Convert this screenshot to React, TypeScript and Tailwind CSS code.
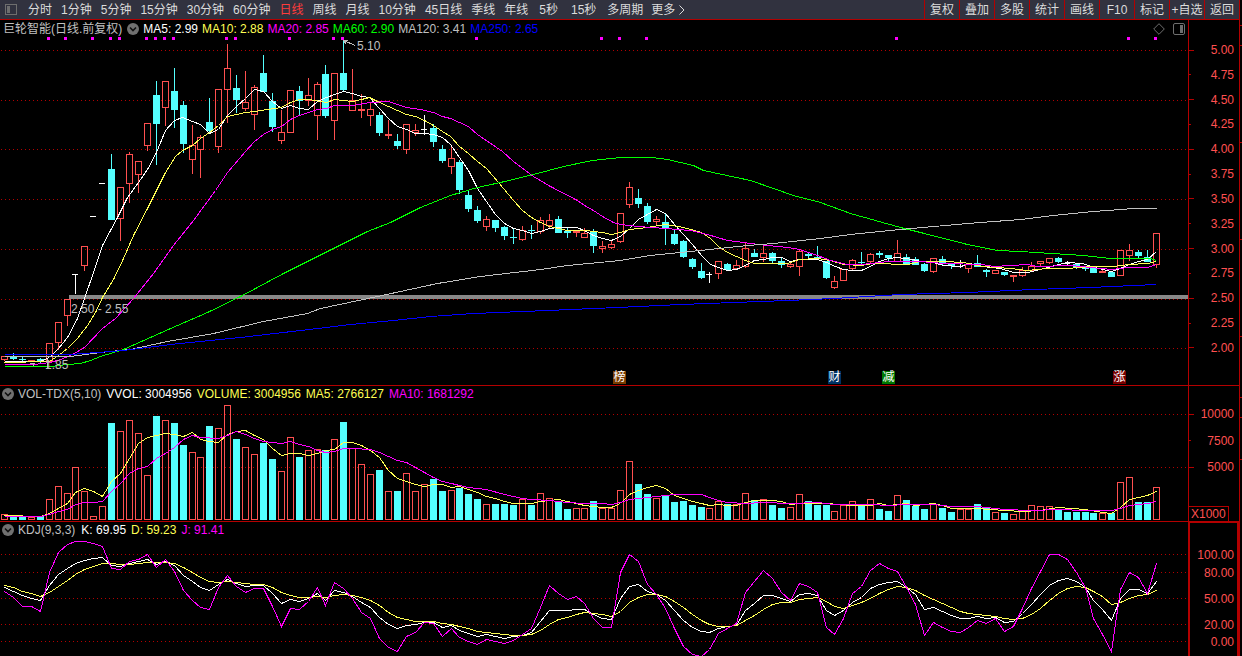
import React from "react";

type Kind = "r" | "c" | "w";
type Candle = [Kind, number, number, number, number];
type Point = [number, number];

const PLOT_WIDTH = 1188;

const barX = (i: number) => Math.round(4 + i * 8.93);

// kind, high, body top, body bottom, low
const candles: Candle[] = [
  ["r", 356, 356, 360, 361], ["c", 353, 357, 359, 360], ["c", 357, 359, 360, 361], ["r", 360, 360, 362, 362], ["c", 358, 359, 362, 364],
  ["r", 343, 343, 362, 362], ["r", 322, 322, 343, 350], ["r", 299, 299, 316, 326], ["w", 274, 274, 274, 294], ["r", 246, 246, 266, 271],
  ["w", 216, 216, 216, 216], ["w", 183, 183, 183, 183], ["c", 154, 169, 220, 220], ["r", 187, 187, 219, 241], ["r", 152, 154, 184, 203],
  ["r", 161, 161, 175, 193], ["r", 123, 123, 146, 151], ["c", 81, 95, 124, 165], ["r", 81, 81, 108, 126], ["c", 68, 91, 110, 128],
  ["c", 101, 105, 144, 153], ["r", 125, 145, 160, 174], ["r", 135, 137, 150, 178], ["c", 98, 122, 131, 132], ["r", 89, 89, 147, 153],
  ["r", 44, 68, 90, 123], ["c", 75, 88, 100, 113], ["r", 71, 102, 109, 111], ["r", 85, 87, 115, 130], ["c", 55, 73, 92, 92],
  ["c", 93, 101, 127, 132], ["r", 110, 132, 141, 144], ["r", 90, 90, 133, 133], ["c", 86, 91, 101, 115], ["r", 78, 95, 101, 106],
  ["r", 82, 84, 116, 140], ["c", 65, 74, 116, 118], ["r", 73, 73, 121, 140], ["c", 40, 73, 90, 91], ["r", 69, 100, 111, 111],
  ["r", 94, 109, 111, 118], ["r", 102, 109, 116, 126], ["c", 112, 115, 133, 136], ["r", 120, 134, 136, 139], ["c", 134, 141, 146, 149],
  ["r", 124, 124, 150, 154], ["r", 124, 130, 133, 136], ["w", 115, 129, 129, 135], ["c", 124, 128, 142, 147], ["c", 145, 149, 161, 163],
  ["r", 147, 158, 167, 174], ["c", 160, 162, 190, 194], ["c", 191, 195, 209, 212], ["c", 206, 210, 221, 223], ["r", 216, 219, 227, 231],
  ["c", 220, 220, 228, 232], ["c", 226, 227, 236, 240], ["c", 228, 237, 238, 244], ["r", 226, 230, 240, 241], ["c", 225, 230, 231, 239],
  ["r", 217, 220, 232, 234], ["r", 214, 220, 226, 228], ["c", 216, 219, 233, 233], ["c", 228, 231, 233, 238], ["r", 231, 231, 233, 237],
  ["r", 228, 233, 238, 238], ["c", 229, 231, 246, 253], ["r", 241, 246, 249, 253], ["r", 241, 244, 248, 249], ["r", 213, 213, 242, 243],
  ["r", 182, 187, 205, 208], ["c", 189, 198, 204, 208], ["c", 203, 206, 222, 224], ["r", 216, 219, 222, 225], ["c", 214, 222, 229, 245],
  ["c", 230, 234, 244, 245], ["c", 240, 241, 257, 258], ["c", 258, 259, 267, 269], ["c", 263, 271, 278, 279], ["w", 272, 274, 274, 283],
  ["r", 261, 261, 274, 279], ["c", 263, 264, 270, 270], ["r", 260, 265, 269, 269], ["r", 242, 248, 267, 268], ["c", 249, 253, 257, 257],
  ["r", 246, 253, 258, 262], ["c", 252, 253, 261, 263], ["c", 257, 261, 265, 268], ["r", 261, 264, 267, 268], ["r", 249, 251, 267, 276],
  ["c", 253, 254, 256, 259], ["c", 246, 257, 258, 259], ["c", 261, 261, 278, 279], ["r", 276, 281, 288, 289], ["r", 269, 269, 281, 281],
  ["r", 259, 260, 269, 271], ["c", 252, 262, 263, 264], ["r", 253, 254, 262, 264], ["c", 251, 253, 255, 258], ["c", 255, 255, 258, 261],
  ["r", 240, 253, 262, 262], ["c", 254, 257, 264, 264], ["c", 257, 259, 265, 265], ["c", 263, 264, 271, 272], ["r", 258, 258, 272, 273],
  ["c", 256, 259, 264, 266], ["c", 263, 264, 266, 269], ["w", 260, 266, 266, 268], ["r", 264, 264, 269, 273], ["c", 255, 263, 267, 267],
  ["c", 269, 270, 272, 277], ["r", 270, 270, 274, 274], ["c", 272, 272, 275, 276], ["r", 275, 275, 277, 282], ["r", 267, 270, 276, 277],
  ["r", 262, 266, 271, 271], ["r", 261, 261, 264, 267], ["r", 258, 258, 263, 264], ["c", 257, 258, 262, 263], ["w", 261, 263, 263, 265],
  ["c", 264, 264, 267, 269], ["c", 266, 267, 269, 271], ["c", 268, 268, 273, 273], ["r", 269, 271, 273, 273], ["c", 271, 272, 277, 277],
  ["r", 250, 250, 276, 276], ["r", 244, 250, 256, 261], ["c", 250, 252, 256, 258], ["c", 250, 257, 262, 262], ["r", 233, 233, 265, 268],
];

const volumeTops: number[] = [
  514, 517, 516, 517, 516, 499, 486, 493, 467, 491, 516, 506, 423, 431, 420, 433, 475, 416, 420, 423,
  445, 452, 457, 426, 428, 405, 439, 447, 454, 443, 459, 471, 437, 457, 450, 449, 450, 439, 422, 448,
  464, 474, 470, 491, 491, 473, 491, 484, 479, 491, 490, 488, 494, 499, 504, 504, 504, 505, 499, 505,
  493, 498, 501, 509, 508, 508, 501, 508, 508, 490, 461, 484, 494, 498, 495, 502, 501, 505, 507, 508,
  501, 504, 504, 493, 500, 499, 505, 508, 507, 494, 501, 505, 505, 511, 505, 501, 505, 499, 509, 511,
  495, 500, 506, 509, 504, 508, 512, 509, 509, 504, 508, 512, 513, 514, 511, 505, 506, 506, 509, 512,
  512, 512, 513, 513, 513, 482, 477, 502, 502, 487,
];

const ma5 =
  "4,361 40,361 49,357 58,348 67,337 77,318 84,298 93,272 102,245 117,217 127,197 138,182 147,169 156,152 165,130 174,120 182,117 192,121 200,124 209,133 218,129 227,115 236,106 245,98 254,89 263,91 272,101 281,108 290,105 299,108 308,109 317,101 326,97 334,94 343,91 352,93 361,96 369,97 379,108 388,118 397,126 406,129 415,133 424,133 433,134 442,137 450,144 459,157 468,170 477,188 486,201 495,214 504,223 513,228 522,230 531,233 540,231 549,228 558,227 576,227 584,230 593,235 602,238 611,240 620,236 629,228 638,219 647,214 656,209 665,213 674,224 683,234 692,244 701,255 710,264 718,267 727,270 736,269 745,265 754,260 763,259 772,257 781,257 790,261 799,259 817,259 826,262 835,266 843,269 852,270 861,270 870,266 879,261 888,258 897,257 912,259 920,261 933,262 943,265 960,266 969,263 982,266 1000,268 1013,272 1027,272 1040,269 1058,264 1067,262 1082,263 1094,267 1111,271 1120,268 1129,264 1138,261 1147,259 1156,251";
const ma10 =
  "4,362 49,361 58,355 67,348 77,338 87,325 95,312 102,297 113,279 123,258 133,235 147,208 156,190 165,172 175,156 182,150 192,145 200,138 209,132 218,125 227,116 245,112 254,111 267,109 281,107 290,102 299,99 308,99 326,102 334,99 352,101 361,99 369,97 379,102 388,106 397,110 406,114 415,116 424,120 433,125 442,131 450,136 459,146 468,153 477,161 486,168 498,182 513,200 522,210 531,217 540,222 549,226 558,228 567,230 585,230 602,232 611,234 620,232 629,229 647,227 665,224 683,227 701,232 710,238 718,246 727,252 736,256 745,260 754,263 787,263 799,259 817,258 830,260 843,264 861,265 873,263 907,264 920,261 943,261 963,262 982,266 1010,268 1027,270 1047,268 1067,268 1090,266 1113,266 1129,264 1147,263 1156,261";
const ma20 =
  "4,364 33,364 50,362 60,359 72,354 84,347 102,328 115,318 133,298 153,273 173,245 193,220 215,190 227,172 245,151 254,141 263,134 272,129 281,126 290,119 299,115 308,112 317,109 326,108 334,105 353,105 369,102 388,101 397,104 406,107 420,109 433,112 442,116 450,118 459,122 468,126 477,134 502,151 513,161 533,176 550,186 577,200 584,205 593,210 602,216 613,222 620,224 638,226 665,228 690,230 707,234 727,240 743,242 758,244 787,247 799,249 817,255 830,260 847,264 861,264 888,261 920,261 943,263 982,264 993,266 1027,264 1037,266 1070,265 1090,267 1112,269 1127,267 1147,267 1156,264";
const ma60 =
  "4,366 50,366 67,364 80,363 90,360 100,356 123,349 177,325 207,312 240,296 283,273 327,251 367,231 390,222 420,207 450,195 477,187 500,182 533,174 563,166 592,160 620,157 652,157 667,159 693,165 703,170 750,180 793,195 820,202 850,213 900,227 920,232 967,244 997,250 1020,251 1083,255 1110,258 1150,258 1156,260";
const ma120 =
  "4,356 70,356 100,352 130,349 167,341 213,333 263,321 307,313 320,308 377,296 400,291 437,283 480,276 540,269 567,265 620,260 650,255 690,251 747,245 773,243 820,238 850,234 900,229 967,223 1020,219 1053,215 1093,211 1120,209 1133,208 1156,208";
const ma250 =
  "4,354 70,354 123,350 170,344 240,337 317,328 350,324 393,320 430,316 473,313 547,310 617,307 680,304 787,300 833,298 900,294 967,292 1033,289 1090,287 1156,284";

const volMa5: Point[] = [
  [0, 515], [4, 516], [5, 513], [6, 508], [7, 503], [8, 492], [9, 488], [10, 491], [11, 496], [12, 481], [13, 473], [14, 458], [15, 443],
  [16, 437], [17, 435], [18, 433], [19, 434], [20, 436], [21, 432], [22, 439], [23, 441], [24, 442], [25, 434], [26, 431], [27, 430],
  [28, 435], [29, 439], [30, 448], [31, 455], [32, 453], [33, 453], [34, 455], [35, 453], [36, 450], [37, 449], [38, 442], [39, 442],
  [40, 445], [41, 450], [42, 457], [43, 470], [44, 478], [45, 481], [46, 484], [47, 486], [48, 484], [49, 484], [50, 487], [51, 486],
  [52, 489], [53, 492], [54, 496], [55, 498], [56, 501], [57, 503], [59, 503], [60, 501], [62, 499], [63, 501], [64, 503], [65, 505],
  [66, 506], [67, 507], [68, 507], [69, 503], [70, 494], [71, 490], [72, 487], [73, 485], [74, 488], [75, 495], [76, 498], [77, 501],
  [78, 503], [79, 505], [80, 504], [81, 505], [82, 505], [83, 502], [84, 500], [86, 500], [87, 501], [88, 504], [89, 503], [92, 503],
  [95, 505], [97, 505], [98, 503], [99, 505], [101, 503], [102, 505], [104, 503], [105, 505], [106, 508], [109, 508], [112, 510],
  [114, 511], [116, 510], [118, 507], [121, 509], [123, 512], [124, 513], [125, 507], [126, 499], [127, 497], [128, 495], [129, 491],
];
const volMa10: Point[] = [
  [0, 516], [4, 516], [5, 514], [6, 511], [7, 509], [8, 504], [9, 502], [10, 502], [11, 501], [12, 491], [13, 483], [14, 473], [15, 468],
  [16, 466], [17, 458], [18, 453], [19, 447], [20, 439], [21, 435], [22, 437], [24, 438], [25, 435], [26, 431], [27, 434], [28, 438],
  [29, 441], [31, 443], [32, 441], [33, 444], [34, 446], [35, 450], [36, 452], [37, 451], [38, 448], [39, 448], [41, 449], [42, 452],
  [43, 456], [44, 460], [45, 462], [46, 467], [47, 472], [48, 477], [49, 481], [50, 483], [51, 485], [52, 487], [54, 489], [56, 494],
  [58, 498], [59, 499], [61, 500], [63, 502], [65, 503], [67, 503], [68, 504], [69, 502], [70, 499], [72, 497], [74, 495], [75, 494],
  [78, 494], [79, 497], [80, 500], [81, 502], [83, 503], [85, 502], [88, 503], [91, 502], [93, 504], [97, 504], [99, 505], [101, 504],
  [104, 504], [106, 506], [109, 506], [112, 509], [115, 510], [118, 509], [121, 510], [124, 510], [125, 508], [126, 505], [127, 504],
  [128, 503], [129, 501],
];

const kdjJ: number[] = [
  591, 597, 606, 606, 611, 572, 552, 544, 541, 541, 543, 546, 568, 569, 561, 559, 554, 567, 559, 571, 590, 600, 607, 609, 587, 575,
  586, 592, 588, 588, 606, 626, 608, 609, 601, 587, 605, 582, 588, 598, 612, 618, 638, 647, 651, 636, 632, 622, 623, 636, 628, 637,
  641, 644, 639, 641, 643, 640, 634, 628, 607, 585, 593, 599, 596, 603, 618, 627, 627, 572, 554, 561, 584, 594, 608, 628, 646, 654,
  656, 649, 633, 628, 623, 592, 581, 570, 578, 592, 600, 583, 586, 592, 627, 634, 618, 593, 586, 570, 563, 568, 571, 587, 604, 635,
  622, 627, 631, 632, 627, 620, 623, 618, 631, 626, 608, 588, 571, 554, 554, 559, 572, 587, 618, 634, 651, 589, 572, 577, 593, 563,
];
const kdjK: number[] = [
  587, 591, 595, 598, 600, 585, 574, 568, 563, 560, 558, 557, 565, 566, 563, 561, 559, 564, 561, 565, 575, 581, 587, 590, 584, 579,
  583, 586, 585, 585, 593, 603, 599, 601, 598, 593, 600, 590, 592, 596, 602, 607, 617, 624, 628, 625, 624, 622, 622, 627, 625, 630,
  633, 636, 634, 636, 638, 636, 635, 632, 621, 610, 610, 610, 609, 609, 614, 618, 619, 598, 586, 584, 591, 594, 600, 610, 620, 627,
  631, 632, 628, 626, 625, 610, 603, 595, 595, 598, 601, 594, 593, 595, 610, 615, 610, 602, 597, 588, 584, 582, 581, 587, 594, 609,
  607, 611, 615, 618, 618, 616, 618, 617, 622, 621, 613, 604, 594, 585, 580, 578, 581, 587, 600, 609, 620, 598, 589, 589, 593, 581,
];
const kdjD: number[] = [
  585, 587, 591, 593, 596, 592, 586, 580, 574, 569, 566, 563, 563, 564, 564, 563, 562, 562, 562, 563, 567, 572, 577, 581, 582, 581,
  582, 583, 584, 584, 587, 592, 595, 597, 597, 596, 597, 595, 594, 595, 597, 600, 605, 612, 617, 619, 621, 621, 621, 623, 624, 626,
  628, 631, 632, 633, 634, 635, 635, 634, 630, 624, 619, 617, 614, 612, 613, 614, 616, 611, 602, 597, 594, 594, 596, 601, 607, 614,
  620, 624, 626, 626, 625, 620, 615, 609, 604, 602, 602, 599, 598, 597, 601, 606, 608, 605, 602, 598, 593, 589, 586, 587, 590, 595,
  599, 603, 607, 611, 613, 614, 615, 616, 618, 619, 618, 614, 608, 600, 593, 588, 586, 587, 591, 596, 604, 602, 598, 595, 594, 590,
];

const byIndex = (points: Point[]) => points.map(([i, y]) => `${barX(i)},${y}`).join(" ");
const dense = (ys: number[]) => ys.map((y, i) => `${barX(i)},${y}`).join(" ");

const signalDots = [47, 64, 91, 109, 118, 145, 154, 163, 172, 225, 234, 288, 332, 341, 475, 600, 618, 645, 895, 1127, 1154];

const RED = "#ff5050";
const CYAN = "#54ffff";
const RULE = "#b40000";
const YELLOW = "#ffff54";
const MAGENTA = "#ff00ff";

function Grid({ rows }: { rows: number[] }) {
  return (
    <g stroke={RULE} strokeDasharray="1 3">
      {rows.map((y) => (
        <line key={y} x1="1" x2={PLOT_WIDTH} y1={y + 0.5} y2={y + 0.5} />
      ))}
    </g>
  );
}

function Line({ points, color }: { points: string; color: string }) {
  return <polyline points={points} fill="none" stroke={color} transform="translate(.5 .5)" />;
}

function Plot({ top, height, label, className, children }: { top: number; height: number; label: string; className: string; children: React.ReactNode }) {
  return (
    <svg
      role="img"
      aria-label={label}
      viewBox={`0 ${top} ${PLOT_WIDTH} ${height}`}
      preserveAspectRatio="none"
      shapeRendering="crispEdges"
      className={`block w-full ${className}`}
    >
      {children}
    </svg>
  );
}

function CandleMark({ candle, index }: { candle: Candle; index: number }) {
  const [kind, high, top, bottom, low] = candle;
  const x = barX(index);
  if (kind === "w") {
    return (
      <g fill="#ffffff">
        <rect x={x - 3} y={top} width="6" height="1" />
        {low > high && <rect x={x} y={high} width="1" height={low - high} />}
      </g>
    );
  }
  if (kind === "c") {
    return (
      <g fill={CYAN}>
        <rect x={x} y={high} width="1" height={low - high} />
        <rect x={x - 3} y={top} width="7" height={bottom - top} />
      </g>
    );
  }
  return (
    <g fill={RED}>
      {top > high && <rect x={x} y={high} width="1" height={top - high} />}
      {low > bottom && <rect x={x} y={bottom} width="1" height={low - bottom} />}
      <rect x={x - 2.5} y={top + 0.5} width="6" height={bottom - top - 1} fill="none" stroke={RED} />
    </g>
  );
}

const periods = [
  "分时", "1分钟", "5分钟", "15分钟", "30分钟", "60分钟", "日线", "周线", "月线", "10分钟", "45日线", "季线", "年线", "5秒", "15秒", "多周期",
];
const tools = ["复权", "叠加", "多股", "统计", "画线", "F10", "标记", "+自选", "返回"];

function Toolbar() {
  return (
    <header className="flex h-5 justify-between border-b border-[#b40000] bg-[#31323f] text-[#dcdcdc]">
      <nav className="flex items-center gap-[9px] whitespace-nowrap pl-[5px]">
        <button type="button" aria-label="侧栏" className="mr-0.5">
          <svg viewBox="0 0 12 12" className="block size-3" shapeRendering="crispEdges">
            <rect x=".5" y=".5" width="11" height="10" rx="1" fill="none" stroke="#6e6e6e" />
            <rect x="2" y="2" width="3" height="7" fill="#6e6e6e" />
          </svg>
        </button>
        {periods.map((p) => (
          <button
            key={p}
            type="button"
            className={p === "日线" ? "text-[#ff3c3c]" : p.endsWith("秒") ? "px-0.5" : ""}
          >
            {p}
          </button>
        ))}
        <button type="button" className="-ml-px flex items-center gap-1">
          更多
          <svg viewBox="0 0 6 10" className="h-2.5 w-1.5" fill="none" stroke="currentColor">
            <path d="M.5.5 5 5 .5 9.5" />
          </svg>
        </button>
      </nav>
      <div className="flex whitespace-nowrap">
        {tools.map((t) => (
          <button key={t} type="button" className="w-[35px] border-l border-[#b40000] text-center">
            {t}
          </button>
        ))}
      </div>
    </header>
  );
}

function Toggle() {
  return (
    <button type="button" aria-label="展开" className="shrink-0">
      <svg viewBox="0 0 12 12" className="block size-3">
        <circle cx="6" cy="6" r="6" fill="#707070" />
        <path d="M3 4.5 6 7.5 9 4.5" fill="none" stroke="#101010" strokeWidth="1.6" />
      </svg>
    </button>
  );
}

function Badge({ x, y, className, children }: { x: number; y: number; className: string; children: string }) {
  return (
    <span
      className={`absolute size-[13px] text-center leading-[13px] text-white ${className}`}
      style={{ left: `${(x / PLOT_WIDTH) * 100}%`, top: y }}
    >
      {children}
    </span>
  );
}

function Note({ x, y, children }: { x: number; y: number; children: string }) {
  return (
    <span className="absolute whitespace-nowrap leading-4 text-[#c0c0c0]" style={{ left: `${(x / PLOT_WIDTH) * 100}%`, top: y }}>
      {children}
    </span>
  );
}

function AxisLabel({ tick, children }: { tick: "major" | "minor" | "none"; children: string }) {
  return (
    <li className="flex h-4 items-center justify-between leading-4">
      <span className={tick === "major" ? "h-px w-[5px] bg-[#b40000]" : tick === "minor" ? "h-px w-0.5 bg-[#b40000]" : "w-0"} />
      {children}
    </li>
  );
}

const prices = ["5.00", "4.75", "4.50", "4.25", "4.00", "3.75", "3.50", "3.25", "3.00", "2.75", "2.50", "2.25", "2.00"];

function PricePanel() {
  return (
    <section className="flex">
      <div className="min-w-0 flex-1">
        <div className="flex h-[17px] items-center gap-1 whitespace-nowrap pl-[3px] pr-[3px] pt-px">
          <h1 className="pr-px text-[#c0c0c0]">巨轮智能(日线.前复权)</h1>
          <Toggle />
          <span className="text-white">MA5: 2.99</span>
          <span className="text-[#ffff54]">MA10: 2.88</span>
          <span className="text-[#ff00ff]">MA20: 2.85</span>
          <span className="text-[#00ff00]">MA60: 2.90</span>
          <span className="text-[#c0c0c0]">MA120: 3.41</span>
          <span className="text-[#0000ff]">MA250: 2.65</span>
          <svg viewBox="0 0 12 12" className="ml-auto mr-1 size-3" fill="none" stroke="#6e6e6e">
            <path d="M6 .7 11.3 6 6 11.3.7 6z" />
          </svg>
          <svg viewBox="0 0 12 12" className="size-3">
            <rect x=".5" y=".5" width="11" height="11" rx="1.5" fill="none" stroke="#6e6e6e" />
            <rect x="7" y="2" width="3" height="8" fill="#6e6e6e" />
          </svg>
        </div>
        <div className="relative">
          <Plot top={37} height={348} label="日线" className="h-[348px]">
            <Grid rows={[50, 100, 149, 199, 249, 299, 348]} />
            <rect x="69" y="295" width={PLOT_WIDTH - 69} height="4" fill="#888888" />
            {signalDots.map((x) => (
              <rect key={x} x={x} y="37" width="3" height="3" fill={MAGENTA} />
            ))}
            {candles.map((c, i) => (
              <CandleMark key={i} candle={c} index={i} />
            ))}
            <Line points={ma5} color="#ffffff" />
            <Line points={ma10} color={YELLOW} />
            <Line points={ma20} color={MAGENTA} />
            <Line points={ma60} color="#00ff00" />
            <Line points={ma120} color="#c0c0c0" />
            <Line points={ma250} color="#0000ff" />
            <path d="M343.500 40.500 355.500 45.500M343.500 40.500h4M343.500 40.500l3 4" fill="none" stroke="#c0c0c0" />
            <path d="M30 363.500h5M33.500 363v3M47.500 359v10" fill="none" stroke="#c0c0c0" />
          </Plot>
          <Note x={357} y={1}>5.10</Note>
          <Note x={71} y={264}>2.50 - 2.55</Note>
          <Note x={45} y={320}>1.85</Note>
          <Badge x={613} y={334} className="bg-[#7a3c00]">榜</Badge>
          <Badge x={828} y={334} className="bg-[#003264]">财</Badge>
          <Badge x={882} y={334} className="bg-[#007800]">减</Badge>
          <Badge x={1113} y={334} className="bg-[#780000]">涨</Badge>
        </div>
      </div>
      <div className="w-[51px] border-l border-[#b40000] pt-[22px] text-[#ff5050]">
        <ul className="flex h-[314px] flex-col justify-between pr-[5px]">
          {prices.map((p, i) => (
            <AxisLabel key={p} tick={i % 2 ? "minor" : "major"}>
              {p}
            </AxisLabel>
          ))}
        </ul>
      </div>
    </section>
  );
}

function VolumePanel() {
  return (
    <section className="flex border-t border-[#b40000]">
      <div className="min-w-0 flex-1">
        <div className="flex h-4 items-center gap-[5px] whitespace-nowrap pl-0.5">
          <Toggle />
          <h2 className="-ml-px text-[#c0c0c0]">VOL-TDX(5,10)</h2>
          <span className="text-white">VVOL: 3004956</span>
          <span className="text-[#ffff54]">VOLUME: 3004956</span>
          <span className="text-[#ffff54]">MA5: 2766127</span>
          <span className="text-[#ff00ff]">MA10: 1681292</span>
        </div>
        <Plot top={402} height={119} label="VOL-TDX" className="h-[119px]">
          <Grid rows={[414, 467]} />
          {volumeTops.map((y, i) => {
            const cyan = candles[i][0] === "c" || i === 119;
            return cyan ? (
              <rect key={i} x={barX(i) - 3} y={y} width="7" height={520 - y} fill={CYAN} />
            ) : (
              <rect key={i} x={barX(i) - 2.5} y={y + 0.5} width="6" height={519 - y} fill="none" stroke={RED} />
            );
          })}
          <Line points={byIndex(volMa5)} color={YELLOW} />
          <Line points={byIndex(volMa10)} color={MAGENTA} />
        </Plot>
      </div>
      <div className="flex w-[51px] flex-col justify-between border-l border-[#b40000] pt-5 text-[#ff5050]">
        <ul className="flex h-[69px] flex-col justify-between pr-[5px]">
          <AxisLabel tick="major">10000</AxisLabel>
          <AxisLabel tick="minor">7500</AxisLabel>
          <AxisLabel tick="major">5000</AxisLabel>
        </ul>
        <span className="h-[15px] w-10 border-r border-t border-[#b40000] pl-0.5 leading-[14px]">X1000</span>
      </div>
    </section>
  );
}

function KdjPanel() {
  return (
    <section className="flex flex-1 border-t border-[#b40000]">
      <div className="min-w-0 flex-1">
        <div className="flex h-4 items-center gap-[5px] whitespace-nowrap pl-0.5">
          <Toggle />
          <h2 className="-ml-px pr-px text-[#c0c0c0]">KDJ(9,3,3)</h2>
          <span className="text-white">K: 69.95</span>
          <span className="text-[#ffff54]">D: 59.23</span>
          <span className="text-[#ff00ff]">J: 91.41</span>
        </div>
        <Plot top={538} height={118} label="KDJ" className="h-[118px]">
          <Grid rows={[554, 572, 598, 624, 641]} />
          <Line points={dense(kdjK)} color="#ffffff" />
          <Line points={dense(kdjD)} color={YELLOW} />
          <Line points={dense(kdjJ)} color={MAGENTA} />
        </Plot>
      </div>
      <ul className="w-[51px] border-x-2 border-t border-[#b40000] pr-[3px] pt-6 text-[#ff5050]">
        <AxisLabel tick="none">100.00</AxisLabel>
        <li className="h-0.5" />
        <AxisLabel tick="none">80.00</AxisLabel>
        <li className="h-2.5" />
        <AxisLabel tick="none">50.00</AxisLabel>
        <li className="h-2.5" />
        <AxisLabel tick="none">20.00</AxisLabel>
        <li className="h-px" />
        <AxisLabel tick="none">0.00</AxisLabel>
      </ul>
    </section>
  );
}

export default function App() {
  return (
    <div className="flex min-h-screen bg-black font-['Liberation_Sans','Noto_Sans_CJK_SC',sans-serif] text-xs">
      <main className="flex min-w-0 flex-1 flex-col">
        <Toolbar />
        <PricePanel />
        <VolumePanel />
        <KdjPanel />
      </main>
      <aside className="w-[3px] border-l border-[#b40000]">
        <svg viewBox="0 0 2 656" className="block h-[656px] w-0.5" shapeRendering="crispEdges" fill={RULE}>
          {[25, 45, 142, 239, 336, 397, 417, 459].map((y) => (
            <rect key={y} x="0" y={y} width="2" height="1" />
          ))}
        </svg>
      </aside>
    </div>
  );
}
